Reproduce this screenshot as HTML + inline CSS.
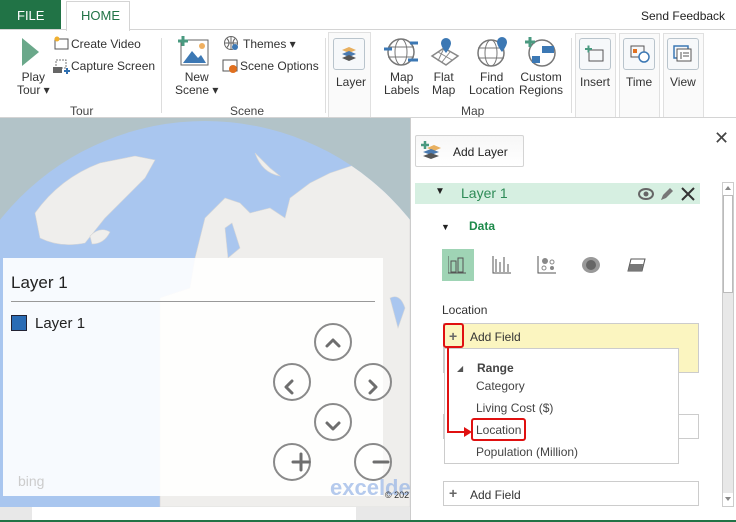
<!DOCTYPE html>
<html><head><meta charset="utf-8"><style>
*{margin:0;padding:0;box-sizing:border-box}
html,body{width:736px;height:522px;overflow:hidden}
body{font-family:"Liberation Sans",sans-serif;background:#fff;position:relative;font-size:12px;color:#333}
.a{position:absolute}
.t{position:absolute;white-space:nowrap}
.grp{font-size:12px;color:#444}
.btn{position:absolute;border:1px solid #d4d4d4;background:linear-gradient(#f7f7f7,#fff);border-radius:2px}
.ib{position:absolute;border:1px solid #b9c4cc;border-radius:3px;background:#f6f8fa}
.circ{position:absolute;width:38px;height:38px;border:2px solid #8a8a8a;border-radius:50%;background:rgba(255,255,255,.6)}
</style></head><body>
<div class="a" style="left:0;top:0;width:61px;height:30px;background:#217346"></div>
<div class="t" style="left:17px;top:8px;color:#fff;font-size:13px">FILE</div>
<div class="a" style="left:66px;top:1px;width:64px;height:30px;border:1px solid #d4d4d4;border-bottom:none;background:#fff"></div>
<div class="t" style="left:81px;top:8px;color:#217346;font-size:13px">HOME</div>
<div class="a" style="left:0;top:29px;width:736px;height:1px;background:#d4d4d4"></div>
<div class="a" style="left:67px;top:29px;width:62px;height:1px;background:#fff"></div>
<div class="t" style="left:641px;top:9px;font-size:12px;color:#222">Send Feedback</div>
<svg class="a" style="left:22px;top:38px" width="18" height="28"><polygon points="0,0 17,14 0,28" fill="#6aa88a"/></svg>
<div class="t" style="left:17px;top:71px;text-align:center;line-height:13px">Play<br>Tour ▾</div>
<svg class="a" style="left:53px;top:36px" width="16" height="14"><rect x="2" y="3" width="13" height="10" fill="none" stroke="#555"/><circle cx="4" cy="3" r="2.5" fill="#f0b030"/></svg>
<div class="t" style="left:71px;top:37px">Create Video</div>
<svg class="a" style="left:52px;top:59px" width="18" height="16"><rect x="4" y="1" width="10" height="8" fill="none" stroke="#777" stroke-dasharray="2,1"/><rect x="1" y="8" width="9" height="6" fill="#666"/><path d="M12 12h6M15 9v6" stroke="#2f6fb0" stroke-width="2"/></svg>
<div class="t" style="left:71px;top:59px">Capture Screen</div>
<div class="t grp" style="left:70px;top:104px">Tour</div>
<div class="a" style="left:161px;top:38px;width:1px;height:75px;background:#ddd"></div>
<svg class="a" style="left:178px;top:36px" width="32" height="30"><rect x="3" y="4" width="27" height="25" fill="#fff" stroke="#666"/><polygon points="5,27 14,15 20,22 23,19 28,27" fill="#3c78b4"/><circle cx="24" cy="10" r="3" fill="#f0b060"/><path d="M0 5h10M5 0v10" stroke="#4a9a80" stroke-width="3"/></svg>
<div class="t" style="left:175px;top:71px;text-align:center;line-height:13px">New<br>Scene ▾</div>
<svg class="a" style="left:224px;top:36px" width="16" height="15"><circle cx="7" cy="7" r="6.5" fill="none" stroke="#666"/><path d="M0.5 7h13M7 0.5v13M3 2.5q4 4.5 0 9M11 2.5q-4 4.5 0 9" stroke="#666" fill="none"/><circle cx="11" cy="11" r="3" fill="#3c78b4"/></svg>
<div class="t" style="left:243px;top:37px">Themes ▾</div>
<svg class="a" style="left:222px;top:58px" width="18" height="16"><rect x="1" y="2" width="14" height="11" fill="none" stroke="#555"/><circle cx="11" cy="11" r="4" fill="#e07020"/></svg>
<div class="t" style="left:240px;top:59px">Scene Options</div>
<div class="t grp" style="left:230px;top:104px">Scene</div>
<div class="a" style="left:325px;top:38px;width:1px;height:75px;background:#ddd"></div>
<div class="a" style="left:328px;top:32px;width:43px;height:86px;border:1px solid #e0e0e0;background:#fafafa"></div>
<div class="ib" style="left:333px;top:38px;width:32px;height:32px"></div>
<svg class="a" style="left:340px;top:45px" width="18" height="18"><path d="M2 5l7-3 7 3-7 3z" fill="#e8b060"/><path d="M2 9l7-3 7 3-7 3z" fill="#4a7ab0"/><path d="M2 13l7-3 7 3-7 3z" fill="#555"/></svg>
<div class="t" style="left:336px;top:75px">Layer</div>
<svg class="a" style="left:384px;top:36px" width="34" height="32"><circle cx="17" cy="16" r="13" fill="none" stroke="#777" stroke-width="1.5"/><ellipse cx="17" cy="16" rx="6" ry="13" fill="none" stroke="#777"/><path d="M4 11h26M4 21h26" stroke="#777"/><path d="M0 13h8M26 7h8M24 24h10" stroke="#3c78b4" stroke-width="3"/></svg>
<div class="t" style="left:384px;top:71px;text-align:center;line-height:13px">Map<br>Labels</div>
<svg class="a" style="left:430px;top:36px" width="30" height="32"><path d="M2 20l12-8 14 8-12 9z" fill="none" stroke="#888" stroke-width="1.5"/><path d="M8 16l14 8M14 12l-6 13M20 16l-8 10" stroke="#888"/><path d="M16 2a5 5 0 0 1 5 5c0 4-5 10-5 10s-5-6-5-10a5 5 0 0 1 5-5z" fill="#3c78b4"/></svg>
<div class="t" style="left:432px;top:71px;text-align:center;line-height:13px">Flat<br>Map</div>
<svg class="a" style="left:477px;top:36px" width="34" height="32"><circle cx="14" cy="17" r="13" fill="none" stroke="#777" stroke-width="1.5"/><ellipse cx="14" cy="17" rx="6" ry="13" fill="none" stroke="#777"/><path d="M1 12h26M1 22h26" stroke="#777"/><path d="M25 1a5 5 0 0 1 5 5c0 4-5 10-5 10s-5-6-5-10a5 5 0 0 1 5-5z" fill="#3c78b4"/></svg>
<div class="t" style="left:469px;top:71px;text-align:center;line-height:13px">Find<br>Location</div>
<svg class="a" style="left:524px;top:36px" width="34" height="32"><circle cx="18" cy="17" r="13" fill="none" stroke="#777" stroke-width="1.5"/><rect x="18" y="10" width="12" height="7" fill="#3c78b4"/><rect x="8" y="20" width="8" height="7" fill="#3c78b4"/><path d="M1 6h10M6 1v10" stroke="#4a9a80" stroke-width="3"/></svg>
<div class="t" style="left:519px;top:71px;text-align:center;line-height:13px">Custom<br>Regions</div>
<div class="t grp" style="left:461px;top:104px">Map</div>
<div class="a" style="left:571px;top:38px;width:1px;height:75px;background:#ddd"></div>
<div class="a" style="left:575px;top:33px;width:41px;height:85px;border:1px solid #e0e0e0;background:#fafafa"></div>
<div class="ib" style="left:579px;top:38px;width:32px;height:32px"></div>
<svg class="a" style="left:585px;top:45px" width="20" height="18"><rect x="4" y="5" width="14" height="11" fill="none" stroke="#555"/><path d="M0 4h7M3.5 0.5v7" stroke="#4a9a80" stroke-width="2"/></svg>
<div class="t" style="left:580px;top:75px">Insert</div>
<div class="a" style="left:619px;top:33px;width:41px;height:85px;border:1px solid #e0e0e0;background:#fafafa"></div>
<div class="ib" style="left:623px;top:38px;width:32px;height:32px"></div>
<svg class="a" style="left:630px;top:45px" width="20" height="18"><rect x="1" y="1" width="13" height="11" fill="none" stroke="#555"/><rect x="3" y="4" width="4" height="4" fill="#e07020"/><circle cx="14" cy="12" r="5" fill="#fff" stroke="#3c78b4" stroke-width="1.5"/></svg>
<div class="t" style="left:626px;top:75px">Time</div>
<div class="a" style="left:663px;top:33px;width:41px;height:85px;border:1px solid #e0e0e0;background:#fafafa"></div>
<div class="ib" style="left:667px;top:38px;width:32px;height:32px"></div>
<svg class="a" style="left:673px;top:45px" width="20" height="18"><rect x="1" y="1" width="14" height="12" fill="none" stroke="#3c78b4" stroke-width="1.5"/><rect x="4" y="4" width="14" height="12" fill="#fff" stroke="#555"/><path d="M8 7v7M10 8h6M10 11h6" stroke="#555"/></svg>
<div class="t" style="left:670px;top:75px">View</div>
<div class="a" style="left:0;top:117px;width:736px;height:1px;background:#d4d4d4"></div>
<!-- map -->
<div class="a" style="left:0;top:118px;width:410px;height:389px;overflow:hidden;background:#b2c3c8">
 <svg class="a" style="left:0;top:0" width="410" height="389">
  <defs><clipPath id="g"><circle cx="205" cy="265" r="262"/></clipPath></defs>
  <circle cx="205" cy="265" r="262" fill="#a9c6ef"/>
  <g clip-path="url(#g)" fill="#efeeec" stroke="#d6d6d6" stroke-width="0.6">
   <path d="M35 95 Q60 60 100 45 L135 38 L155 42 L145 60 Q120 85 105 100 L85 125 Q60 130 40 120 Z"/>
   <path d="M90 118 Q100 108 110 114 Q104 126 92 126Z"/>
   <path d="M255 35 Q262 55 280 58 L270 50 Z"/>
   <path d="M195 140 L205 100 L225 80 L240 85 L250 95 L270 90 L285 100 L290 80 L310 65 L330 55 L360 45 L410 40 L410 389 L160 389 L160 180 L190 170 Z"/>
   <path d="M228 140 L225 110 L232 105 L240 130 Z" fill="#a9c6ef"/>
   <path d="M390 180 Q400 175 405 190 L398 210 Z" fill="#a9c6ef"/>
  </g>
 </svg>
 <div class="a" style="left:3px;top:140px;width:380px;height:238px;background:rgba(255,255,255,.9)"></div>
 <div class="t" style="left:11px;top:155px;font-size:17px;color:#222">Layer 1</div>
 <div class="a" style="left:11px;top:183px;width:364px;height:1px;background:#999"></div>
 <div class="a" style="left:11px;top:197px;width:16px;height:16px;background:#2a6cb5;border:1px solid #223"></div>
 <div class="t" style="left:35px;top:197px;font-size:15px;color:#222">Layer 1</div>
 <div class="t" style="left:18px;top:355px;font-size:14px;color:#ccc">bing</div>
 <div class="circ" style="left:314px;top:205px"></div>
 <div class="circ" style="left:273px;top:245px"></div>
 <div class="circ" style="left:354px;top:245px"></div>
 <div class="circ" style="left:314px;top:285px"></div>
 <div class="circ" style="left:273px;top:325px"></div>
 <div class="circ" style="left:354px;top:325px"></div>
 <svg class="a" style="left:270px;top:200px" width="140" height="189" fill="none" stroke="#6e6e6e" stroke-width="3" stroke-linecap="round" stroke-linejoin="round">
  <path d="M57 28l6-6 6 6"/><path d="M22 63l-6 6 6 6"/><path d="M100 63l6 6-6 6"/><path d="M57 105l6 6 6-6"/>
  <path d="M23 144h16M31 136v16"/><path d="M104 144h14"/>
 </svg>
 <div class="t" style="left:330px;top:357px;font-size:22px;color:rgba(150,180,230,.7);font-weight:bold">excelde</div>
 <div class="t" style="left:385px;top:372px;font-size:9px;color:#333">© 202</div>
</div>
<div class="a" style="left:0;top:507px;width:410px;height:13px;background:#e8e8e8"></div>
<div class="a" style="left:32px;top:507px;width:324px;height:13px;background:#fff"></div>
<div class="a" style="left:0;top:520px;width:736px;height:2px;background:#217346"></div>
<!-- right panel -->
<div class="a" style="left:410px;top:118px;width:1px;height:402px;background:#ccc"></div>
<div class="t" style="left:714px;top:128px;font-size:18px;color:#444">✕</div>
<div class="btn" style="left:415px;top:135px;width:109px;height:32px"></div>
<svg class="a" style="left:421px;top:140px" width="20" height="20"><path d="M0 5h8M4 1v8" stroke="#4a9a80" stroke-width="2.5"/><path d="M6 8l7-3 7 3-7 3z" fill="#e8b060"/><path d="M2 12l8-3 8 3-8 3z" fill="#4a7ab0"/><path d="M2 16l8-3 8 3-8 3z" fill="#555"/></svg>
<div class="t" style="left:453px;top:145px;font-size:12px;color:#222">Add Layer</div>
<div class="a" style="left:415px;top:183px;width:285px;height:21px;background:#d6efe1"></div>
<div class="t" style="left:435px;top:186px;font-size:10px;color:#222">▼</div>
<div class="t" style="left:461px;top:185px;font-size:14px;color:#2e8b57">Layer 1</div>
<svg class="a" style="left:638px;top:186px" width="62" height="16"><ellipse cx="8" cy="8" rx="7" ry="5" fill="none" stroke="#666" stroke-width="2"/><circle cx="8" cy="8" r="2.5" fill="#666"/><path d="M23 14l2-5 7-7 3 3-7 7z" fill="#777"/><path d="M44 2l12 12M56 2l-12 12" stroke="#333" stroke-width="2"/></svg>
<div class="t" style="left:441px;top:222px;font-size:9px;color:#222">▼</div>
<div class="t" style="left:469px;top:219px;font-size:12px;font-weight:bold;color:#1d8a4a">Data</div>
<div class="a" style="left:442px;top:249px;width:32px;height:32px;background:#9fd4b5"></div>
<svg class="a" style="left:448px;top:256px" width="230" height="20"><g fill="none" stroke="#555"><path d="M0 0v17h18"/><rect x="3" y="5" width="5" height="11"/><rect x="10" y="2" width="5" height="14"/><path d="M45 0v17h18M48 3v13M52 6v10M56 1v15M60 8v8"/><path d="M90 0v17h18"/></g><circle cx="97" cy="5" r="3" fill="#888"/><circle cx="104" cy="6" r="2" fill="none" stroke="#888"/><circle cx="96" cy="12" r="2" fill="none" stroke="#888"/><circle cx="104" cy="12" r="2" fill="#888"/><ellipse cx="143" cy="9" rx="9" ry="8" fill="#999"/><circle cx="143" cy="9" r="5" fill="#666"/><path d="M180 15l3-12h14l-3 12z" fill="#fff" stroke="#555"/><path d="M180 15l2-7h13l-1 7z" fill="#777"/></svg>
<div class="t" style="left:442px;top:303px;font-size:12px;color:#333">Location</div>
<div class="a" style="left:443px;top:323px;width:256px;height:50px;background:#fbf5c0;border:1px solid #ccc"></div>
<div class="t" style="left:449px;top:328px;font-size:14px;color:#666;font-weight:bold">+</div>
<div class="t" style="left:470px;top:330px;font-size:12px;color:#333">Add Field</div>
<div class="a" style="left:443px;top:414px;width:256px;height:25px;border:1px solid #ccc"></div>
<div class="a" style="left:443px;top:481px;width:256px;height:25px;border:1px solid #ccc"></div>
<div class="t" style="left:449px;top:485px;font-size:14px;color:#666;font-weight:bold">+</div>
<div class="t" style="left:470px;top:488px;font-size:12px;color:#333">Add Field</div>
<div class="a" style="left:444px;top:348px;width:235px;height:116px;background:#fff;border:1px solid #ccc"></div>
<div class="t" style="left:457px;top:364px;font-size:8px;color:#555">◢</div>
<div class="t" style="left:477px;top:361px;font-size:12px;font-weight:bold;color:#444">Range</div>
<div class="t" style="left:476px;top:379px;font-size:12px;color:#444">Category</div>
<div class="t" style="left:476px;top:401px;font-size:12px;color:#444">Living Cost ($)</div>
<div class="t" style="left:476px;top:423px;font-size:12px;color:#444">Location</div>
<div class="t" style="left:476px;top:445px;font-size:12px;color:#444">Population (Million)</div>
<div class="a" style="left:443px;top:323px;width:21px;height:25px;border:2px solid #e01010;border-radius:3px"></div>
<div class="a" style="left:471px;top:418px;width:55px;height:23px;border:2px solid #e01010;border-radius:3px"></div>
<div class="a" style="left:447px;top:347px;width:2px;height:85px;background:#e01010"></div>
<div class="a" style="left:447px;top:431px;width:20px;height:2px;background:#e01010"></div>
<svg class="a" style="left:464px;top:427px" width="8" height="10"><polygon points="0,0 8,5 0,10" fill="#e01010"/></svg>
<div class="a" style="left:722px;top:182px;width:12px;height:325px;background:#fff;border:1px solid #ccc"></div>
<svg class="a" style="left:724px;top:185px" width="8" height="6"><polygon points="4,1 7,5 1,5" fill="#888"/></svg>
<div class="a" style="left:723px;top:195px;width:10px;height:98px;background:#fff;border:1px solid #bbb"></div>
<div class="a" style="left:723px;top:293px;width:10px;height:200px;background:#e8e8e8"></div>
<svg class="a" style="left:724px;top:496px" width="8" height="6"><polygon points="1,1 7,1 4,5" fill="#888"/></svg>
</body></html>
